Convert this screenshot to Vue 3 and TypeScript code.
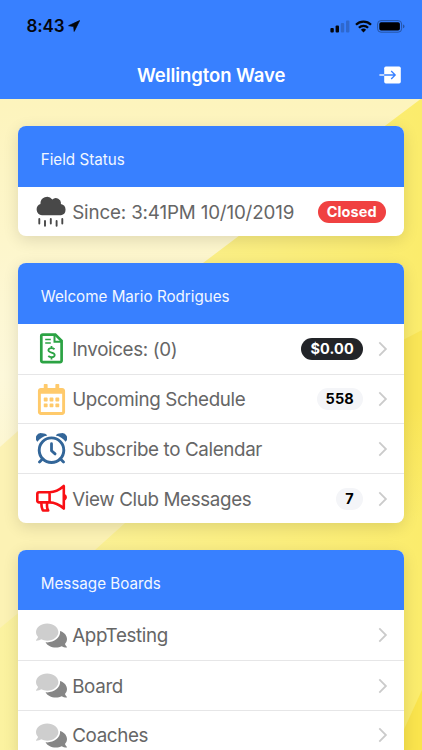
<script setup lang="ts">
type IconName = 'rain' | 'invoice' | 'calendar' | 'alarm' | 'megaphone' | 'comments'

interface Row {
  icon: IconName
  label: string
  badge?: string
  tone?: 'danger' | 'dark' | 'light'
  link: boolean
}

interface Card {
  title: string
  rows: Row[]
}

const cards: Card[] = [
  {
    title: 'Field Status',
    rows: [{ icon: 'rain', label: 'Since: 3:41PM 10/10/2019', badge: 'Closed', tone: 'danger', link: false }],
  },
  {
    title: 'Welcome Mario Rodrigues',
    rows: [
      { icon: 'invoice', label: 'Invoices: (0)', badge: '$0.00', tone: 'dark', link: true },
      { icon: 'calendar', label: 'Upcoming Schedule', badge: '558', tone: 'light', link: true },
      { icon: 'alarm', label: 'Subscribe to Calendar', link: true },
      { icon: 'megaphone', label: 'View Club Messages', badge: '7', tone: 'light', link: true },
    ],
  },
  {
    title: 'Message Boards',
    rows: [
      { icon: 'comments', label: 'AppTesting', link: true },
      { icon: 'comments', label: 'Board', link: true },
      { icon: 'comments', label: 'Coaches', link: true },
    ],
  },
]
</script>

<template>
  <div class="screen">
    <svg class="backdrop" viewBox="0 0 422 750" preserveAspectRatio="none" aria-hidden="true">
      <defs>
        <linearGradient id="pale" x1="0" y1="0" x2="0" y2="1">
          <stop offset="0" stop-color="#fdf5c3" />
          <stop offset="0.14" stop-color="#fdf4bd" />
          <stop offset="0.5" stop-color="#fdf8da" />
          <stop offset="1" stop-color="#fcf3b4" />
        </linearGradient>
        <linearGradient id="gold" x1="0" y1="0" x2="1" y2="0">
          <stop offset="0" stop-color="#fbf2a0" />
          <stop offset="1" stop-color="#fbec6c" />
        </linearGradient>
        <linearGradient id="amber" gradientUnits="userSpaceOnUse" x1="0" y1="330" x2="0" y2="520">
          <stop offset="0" stop-color="#f9e557" />
          <stop offset="0.4" stop-color="#f9e557" />
          <stop offset="1" stop-color="#f9e557" stop-opacity="0" />
        </linearGradient>
      </defs>
      <rect width="422" height="750" fill="url(#pale)" />
      <path d="M0 447L18 431L200 290V523L0 680z" fill="#fcf2b4" />
      <path d="M422 98L203 263V450L125 523L95 550L0 628V750H422z" fill="url(#gold)" />
      <path d="M422 330L380 352V520H422z" fill="url(#amber)" />
      <path d="M422 690L390 760H422z" fill="#fae44d" />
    </svg>

    <header class="topbar">
      <div class="status">
        <span class="clock">8:43</span>
        <svg class="locate" viewBox="0 0 12 12"><path d="M11.600.6L.6 5.700l5.100.7.5 5z" fill="#04060c" stroke="#04060c" stroke-width=".8" stroke-linejoin="round" /></svg>
        <span class="spacer"></span>
        <svg class="signal" viewBox="0 0 20 13">
          <rect x=".4" y="8" width="3.400" height="4.400" rx="1" fill="#04060c" />
          <rect x="5.600" y="5.600" width="3.400" height="6.800" rx="1" fill="#04060c" />
          <rect x="10.800" y="3" width="3.400" height="9.400" rx="1" fill="#2f68cd" />
          <rect x="16" y=".4" width="3.400" height="12" rx="1" fill="#2f68cd" />
        </svg>
        <svg class="wifi" viewBox="0 0 17 13">
          <g fill="none" stroke="#04060c" stroke-width="2.300">
            <path d="M1 4.700a10.700 10.700 0 0 1 15 0" />
            <path d="M3.900 7.800a6.600 6.600 0 0 1 9.200 0" />
          </g>
          <path d="M5.900 9.800a3.800 3.800 0 0 1 5.200 0l-2.600 2.700z" fill="#04060c" />
        </svg>
        <svg class="battery" viewBox="0 0 28 13">
          <rect x=".6" y=".6" width="24" height="11.600" rx="3.400" fill="none" stroke="#2654a6" />
          <rect x="2.300" y="2.300" width="20.600" height="8.200" rx="1.800" fill="#000" />
          <path d="M26 4.500c2 .5 2 3.300 0 3.800z" fill="#2654a6" />
        </svg>
      </div>
      <div class="titlebar">
        <h1>Wellington Wave</h1>
        <svg class="exit" viewBox="0 0 22 18">
          <rect x="5.200" y=".5" width="16.600" height="17" rx="1.700" fill="#fff" />
          <path d="M.4 9h5" stroke="#fff" stroke-width="1.300" fill="none" />
          <path d="M5.200 9H16M12.200 5l4 4-4 4" stroke="#3880ff" stroke-width="1.300" fill="none" />
        </svg>
      </div>
    </header>

    <main class="cards">
      <section v-for="card in cards" :key="card.title" class="card">
        <h2>{{ card.title }}</h2>
        <div v-for="row in card.rows" :key="row.label" class="row">
          <svg v-if="row.icon === 'rain'" class="icon" viewBox="0 0 31 31">
            <path d="M6 19.300a5.900 5.900 0 0 1-1.500-11.400A6.500 6.500 0 0 1 16.300 3.600a5 5 0 0 1 8.500 4.500A5.700 5.700 0 0 1 25 19.300z" fill="#484848" />
            <path d="M3.300 22.900v4.700M9 25v4.700M14.800 22.900v4.700M20.600 25v4.700M26.300 22.900v4.700" stroke="#484848" stroke-width="1.900" stroke-linecap="round" />
          </svg>
          <svg v-else-if="row.icon === 'invoice'" class="icon" viewBox="0 0 31 31" fill="none" stroke="#2ca344">
            <path d="M6.800 1.600H19.300l6.300 6.300v19.800a1.500 1.500 0 0 1-1.500 1.500H6.800a1.500 1.500 0 0 1-1.500-1.500V3.100a1.500 1.500 0 0 1 1.500-1.500z" stroke-width="2.700" />
            <path d="M18.500 2v6.800h6.800" stroke-width="2" />
            <path d="M9.200 6.400h5.600M9.200 10h5.600" stroke-width="1.500" />
            <path d="M18.500 16.200c-.8-.7-1.800-1-2.900-1-1.900 0-3.200.8-3.200 2.100 0 3 6.300 1.500 6.300 4.700 0 1.500-1.300 2.200-3.200 2.200-1.300 0-2.400-.4-3.200-1.200M15.500 13.100v2.300M15.500 24v2.400" stroke-width="1.800" />
          </svg>
          <svg v-else-if="row.icon === 'calendar'" class="icon" viewBox="-32 0 512 512">
            <path fill="#ffca6b" d="M148 288h-40c-6.600 0-12-5.400-12-12v-40c0-6.600 5.400-12 12-12h40c6.600 0 12 5.400 12 12v40c0 6.600-5.400 12-12 12zm108-12v-40c0-6.600-5.400-12-12-12h-40c-6.600 0-12 5.400-12 12v40c0 6.600 5.400 12 12 12h40c6.600 0 12-5.400 12-12zm96 0v-40c0-6.600-5.400-12-12-12h-40c-6.600 0-12 5.400-12 12v40c0 6.600 5.400 12 12 12h40c6.600 0 12-5.400 12-12zm-96 96v-40c0-6.600-5.400-12-12-12h-40c-6.600 0-12 5.400-12 12v40c0 6.600 5.400 12 12 12h40c6.600 0 12-5.400 12-12zm-96 0v-40c0-6.600-5.400-12-12-12h-40c-6.600 0-12 5.400-12 12v40c0 6.600 5.400 12 12 12h40c6.600 0 12-5.400 12-12zm192 0v-40c0-6.600-5.400-12-12-12h-40c-6.600 0-12 5.400-12 12v40c0 6.600 5.400 12 12 12h40c6.600 0 12-5.400 12-12zm96-260v352c0 26.500-21.500 48-48 48H48c-26.500 0-48-21.500-48-48V112c0-26.500 21.500-48 48-48h48V12c0-6.600 5.400-12 12-12h40c6.600 0 12 5.400 12 12v52h128V12c0-6.600 5.400-12 12-12h40c6.600 0 12 5.400 12 12v52h48c26.500 0 48 21.500 48 48zm-48 346V160H48v298c0 3.300 2.700 6 6 6h340c3.300 0 6-2.700 6-6z" />
          </svg>
          <svg v-else-if="row.icon === 'alarm'" class="icon" viewBox="0 0 31 31">
            <g fill="none" stroke="#336699">
              <circle cx="15.500" cy="17.200" r="12.300" stroke-width="2.900" />
              <path d="M15.500 10.700v7l3.600 3.200" stroke-width="2.800" stroke-linecap="round" stroke-linejoin="round" />
              <path d="M6.500 26.100l-3 3M24.500 26.100l3 3" stroke-width="2.800" stroke-linecap="round" />
            </g>
            <path d="M1.400 8.800A5 5 0 0 1 6 .3c2.300-.1 4.200.9 5.300 2.100A16 16 0 0 0 1.400 8.800zM29.600 8.800A5 5 0 0 0 25 .3c-2.300-.1-4.200.9-5.300 2.100A16 16 0 0 1 29.600 8.800z" fill="#336699" />
          </svg>
          <svg v-else-if="row.icon === 'megaphone'" class="icon" viewBox="0 0 31 31" fill="none" stroke="#f90f14" stroke-width="2.600" stroke-linejoin="round">
            <path d="M3 9.200h10.500c5.500 0 10-2.400 14.300-6.200v22.600c-4.300-3.800-8.800-6.200-14.300-6.200H3c-1 0-1.700-.7-1.700-1.700v-6.800c0-1 .7-1.700 1.700-1.700zM13.600 9.500v9.700" />
            <path d="M5.300 19.700c0 3 .6 5.600 1.600 7.800h5.300c-1.200-2-1.600-4-1-7.800" />
            <path d="M29.200 12.200c1.300.9 1.300 3.300 0 4.200z" stroke-width="1.500" fill="#f90f14" />
          </svg>
          <svg v-else class="icon" viewBox="0 -32 576 576">
            <path fill="#cecece" d="M416 192c0-88.400-93.100-160-208-160S0 103.600 0 192c0 34.300 14.100 65.900 38 92-13.400 30.200-35.500 54.200-35.800 54.500-2.200 2.300-2.800 5.700-1.500 8.700S4.800 352 8 352c36.600 0 66.900-12.300 88.700-25 32.200 15.700 70.300 25 111.300 25 114.900 0 208-71.600 208-160z" />
            <path fill="#868686" d="M538 412c23.900-26 38-57.700 38-92 0-66.900-53.500-124.200-129.300-148.100.9 6.600 1.300 13.300 1.300 20.100 0 105.900-107.700 192-240 192-10.800 0-21.300-.8-31.700-1.900C207.800 439.600 281.800 480 368 480c41 0 79.100-9.200 111.300-25 21.800 12.700 52.100 25 88.700 25 3.200 0 6.100-1.900 7.300-4.800 1.300-2.900.7-6.300-1.500-8.700-.3-.3-22.400-24.200-35.800-54.500z" />
          </svg>
          <span class="label" :class="{ numeric: row.icon === 'rain' }">{{ row.label }}</span>
          <span v-if="row.badge" class="badge" :class="row.tone">{{ row.badge }}</span>
          <svg v-if="row.link" class="chevron" viewBox="0 0 10 16"><path d="M1.300 1.400L7.900 8l-6.600 6.600" fill="none" stroke="#cbcbcb" stroke-width="1.800" /></svg>
        </div>
      </section>
    </main>
  </div>
</template>

<style>
body {
  overflow: hidden;
}
</style>

<style scoped>
.screen {
  position: relative;
  width: 422px;
  height: 750px;
  overflow: hidden;
  box-sizing: border-box;
  font-family: Inter, "Liberation Sans", sans-serif;
}
.backdrop {
  position: absolute;
  inset: 0;
  width: 422px;
  height: 750px;
}
.topbar {
  position: relative;
  height: 99px;
  background: #3880ff;
}
.status {
  display: flex;
  align-items: center;
  height: 52px;
  padding: 0 17px 0 26.500px;
  box-sizing: border-box;
}
.clock {
  font-size: 17px;
  font-weight: 600;
  color: #04060c;
  letter-spacing: -0.1px;
  width: 41px;
}
.locate { width: 12px; height: 12px; }
.spacer { flex: 1; }
.signal { width: 20px; height: 13px; }
.wifi { width: 17px; height: 13px; margin-left: 5px; }
.battery { width: 28px; height: 13px; margin-left: 5px; }
.titlebar {
  display: flex;
  align-items: center;
  justify-content: flex-end;
  height: 45px;
  padding: 0 21px 0 137px;
}
h1 {
  flex: 1;
  margin: 0;
  font-size: 18.500px;
  font-weight: 600;
  letter-spacing: -0.08px;
  color: #fff;
  white-space: nowrap;
}
.exit { width: 22px; height: 18px; }
.cards {
  position: relative;
  display: flex;
  flex-direction: column;
  gap: 27px;
  padding: 27.200px 18.200px 0;
}
.card {
  flex: none;
  border-radius: 8px;
  overflow: hidden;
  background: #fff;
  box-shadow: 0 4px 16px rgba(0, 0, 0, 0.12);
}
h2 {
  display: flex;
  align-items: center;
  height: 60.500px;
  margin: 0;
  padding: 6px 23px 0 22.500px;
  box-sizing: border-box;
  background: #3880ff;
  color: #f2f7ff;
  font-size: 15.200px;
  font-weight: 400;
}
.row {
  display: flex;
  align-items: center;
  height: 49.750px;
  padding: 0 18px;
  box-sizing: border-box;
}
.row + .row {
  border-top: 1px solid #e6e6e7;
}
.icon {
  width: 31px;
  height: 31px;
  margin-right: 5px;
  flex: none;
}
.label {
  flex: 1;
  padding-top: 1px;
  color: #666;
  font-size: 18.800px;
  letter-spacing: -0.36px;
  white-space: nowrap;
}
.numeric {
  letter-spacing: -0.16px;
}
.badge {
  box-sizing: border-box;
  height: 22px;
  padding: 0 9px;
  border-radius: 11px;
  font-size: 14.500px;
  line-height: 22px;
  font-weight: 700;
  letter-spacing: 0.1px;
}
.danger { background: #f04141; color: #fff; }
.dark { background: #222428; color: #fff; }
.light { background: #f4f5f8; color: #000; }
.chevron {
  width: 10px;
  height: 16px;
  margin-left: 15px;
  margin-right: -2px;
  flex: none;
}
</style>
